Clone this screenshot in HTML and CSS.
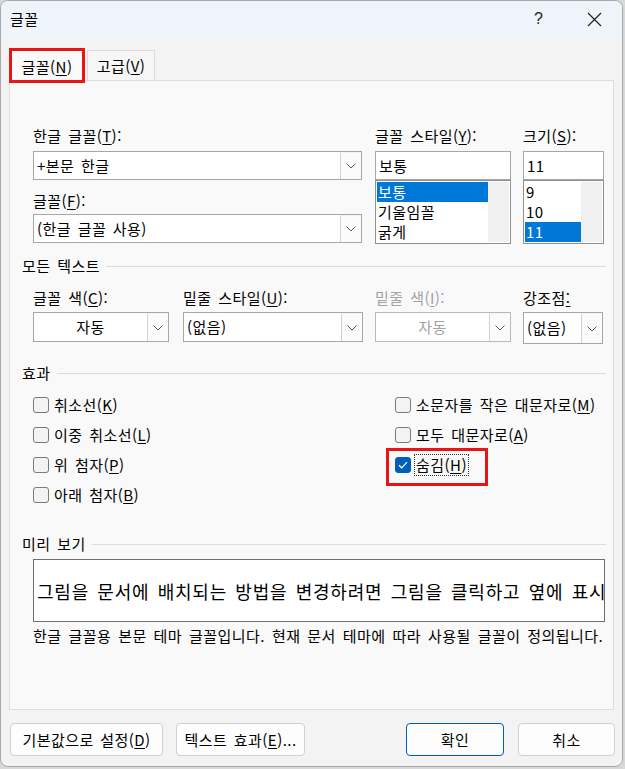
FILE: index.html
```html
<!DOCTYPE html>
<html lang="ko">
<head>
<meta charset="utf-8">
<title>글꼴</title>
<link rel="stylesheet" href="styles.css">
</head>
<body>
<div class="dialog">
  <div class="titlebar">
    <span class="title">글꼴</span>
    <span class="help">?</span>
    <span class="close"><svg width="15" height="15" viewBox="0 0 15 15"><path d="M1 1L14 14M14 1L1 14" stroke="#1b1b1b" stroke-width="1.1" fill="none"/></svg></span>
  </div>
  <div class="tabs">
    <div class="tab active">글꼴(<u>N</u>)</div>
    <div class="tab">고급(<u>V</u>)</div>
  </div>
  <div class="panel">
    <div class="fontrow">
      <div class="col col-font">
        <div class="lbl">한글 글꼴(<u>T</u>):</div>
        <div class="combo field-top"><span class="val">+본문 한글</span><span class="drop"><svg width="10" height="6" viewBox="0 0 10 6"><path d="M0.5 0.5L5 5L9.5 0.5" stroke="#5a5a5a" fill="none"/></svg></span></div>
        <div class="lbl lbl-second">글꼴(<u>F</u>):</div>
        <div class="combo field-second"><span class="val">(한글 글꼴 사용)</span><span class="drop"><svg width="10" height="6" viewBox="0 0 10 6"><path d="M0.5 0.5L5 5L9.5 0.5" stroke="#5a5a5a" fill="none"/></svg></span></div>
      </div>
      <div class="col col-style">
        <div class="lbl">글꼴 스타일(<u>Y</u>):</div>
        <div class="textbox field-top">보통</div>
        <div class="listbox">
          <div class="items">
            <div class="item sel">보통</div>
            <div class="item">기울임꼴</div>
            <div class="item">굵게</div>
          </div>
          <div class="vscroll"></div>
        </div>
      </div>
      <div class="col col-size">
        <div class="lbl">크기(<u>S</u>):</div>
        <div class="textbox field-top">11</div>
        <div class="listbox">
          <div class="items">
            <div class="item">9</div>
            <div class="item">10</div>
            <div class="item sel">11</div>
          </div>
          <div class="vscroll"></div>
        </div>
      </div>
    </div>

    <div class="group g-all">모든 텍스트</div>
    <div class="colorrow">
      <div class="cfield w-color">
        <div class="lbl">글꼴 색(<u>C</u>):</div>
        <div class="combo c30"><span class="val center">자동</span><span class="drop"><svg width="10" height="6" viewBox="0 0 10 6"><path d="M0.5 0.5L5 5L9.5 0.5" stroke="#5a5a5a" fill="none"/></svg></span></div>
      </div>
      <div class="cfield w-under">
        <div class="lbl">밑줄 스타일(<u>U</u>):</div>
        <div class="combo c30"><span class="val">(없음)</span><span class="drop"><svg width="10" height="6" viewBox="0 0 10 6"><path d="M0.5 0.5L5 5L9.5 0.5" stroke="#5a5a5a" fill="none"/></svg></span></div>
      </div>
      <div class="cfield w-ucolor disabled">
        <div class="lbl">밑줄 색(<u>I</u>):</div>
        <div class="combo c30"><span class="val center">자동</span><span class="drop"><svg width="10" height="6" viewBox="0 0 10 6"><path d="M0.5 0.5L5 5L9.5 0.5" stroke="#5a5a5a" fill="none"/></svg></span></div>
      </div>
      <div class="cfield w-emph">
        <div class="lbl">강조점<u>:</u></div>
        <div class="combo c32"><span class="val">(없음)</span><span class="drop"><svg width="10" height="6" viewBox="0 0 10 6"><path d="M0.5 0.5L5 5L9.5 0.5" stroke="#5a5a5a" fill="none"/></svg></span></div>
      </div>
    </div>

    <div class="group g-effects">효과</div>
    <div class="effects">
      <div class="check"><span class="box"></span><span class="ctext">취소선(<u>K</u>)</span></div>
      <div class="check"><span class="box"></span><span class="ctext">소문자를 작은 대문자로(<u>M</u>)</span></div>
      <div class="check"><span class="box"></span><span class="ctext">이중 취소선(<u>L</u>)</span></div>
      <div class="check"><span class="box"></span><span class="ctext">모두 대문자로(<u>A</u>)</span></div>
      <div class="check"><span class="box"></span><span class="ctext">위 첨자(<u>P</u>)</span></div>
      <div class="check marked"><span class="box on"><svg width="10" height="8" viewBox="0 0 10 8"><path d="M1 4.2L3.7 6.8L9 1.2" stroke="#ffffff" stroke-width="1.2" fill="none"/></svg></span><span class="ctext focus">숨김(<u>H</u>)</span></div>
      <div class="check"><span class="box"></span><span class="ctext">아래 첨자(<u>B</u>)</span></div>
      <div class="check empty"></div>
    </div>

    <div class="group g-preview">미리 보기</div>
    <div class="preview"><span>그림을 문서에 배치되는 방법을 변경하려면 그림을 클릭하고 옆에 표시</span></div>
    <div class="desc">한글 글꼴용 본문 테마 글꼴입니다. 현재 문서 테마에 따라 사용될 글꼴이 정의됩니다.</div>
  </div>

  <div class="buttons">
    <div class="btn b-default">기본값으로 설정(<u>D</u>)</div>
    <div class="btn b-effects">텍스트 효과(<u>E</u>)...</div>
    <div class="spacer"></div>
    <div class="btn b-ok primary">확인</div>
    <div class="btn b-cancel">취소</div>
  </div>
</div>
</body>
</html>
```

FILE: styles.css
```css
* { box-sizing: border-box; }
html, body { margin: 0; padding: 0; }
body {
  background: #d8d8d8;
  width: 625px;
  height: 769px;
  overflow: hidden;
  font-family: "Noto Sans CJK KR", "Noto Sans", sans-serif;
  font-size: 15px;
  color: #000;
  letter-spacing: 0.45px;
  word-spacing: 2px;
}
u { text-decoration-thickness: 1px; text-underline-offset: 2px; }

.dialog {
  width: 623px;
  height: 767px;
  background: #f3f3f3;
  border: 1px solid #a9a9a9;
  border-radius: 8px;
  overflow: hidden;
  display: flex;
  flex-direction: column;
}

/* title bar */
.titlebar {
  height: 36px;
  flex: none;
  background: #eef4f9;
  display: flex;
  align-items: center;
  padding-left: 9px;
}
.title { flex: 1; line-height: 20px; }
.help { width: 20px; margin-right: 33px; font-size: 16px; line-height: 20px; font-family: "Liberation Sans", sans-serif; color: #222; }
.close { width: 15px; height: 15px; margin-right: 20px; display: flex; }

/* tabs */
.tabs {
  height: 43px;
  flex: none;
  display: flex;
  align-items: flex-start;
  padding-top: 11px;
  padding-left: 8px;
  position: relative;
  z-index: 2;
}
.tab {
  line-height: 20px;
  display: flex;
  align-items: center;
  justify-content: center;
}
.tab.active {
  width: 76px;
  height: 35px;
  border: 3px solid #e81416;
  background: #f9f9f9;
  padding-top: 2px;
}
.tab:not(.active) {
  margin-top: 2px;
  margin-left: 2px;
  width: 68px;
  height: 30px;
  border: 1px solid #dadada;
  border-bottom: none;
  background: #f6f6f6;
}

/* panel */
.panel {
  flex: none;
  margin-left: 8px;
  width: 605px;
  height: 630px;
  border: 1px solid #dcdcdc;
  background: #f9f9f9;
  padding: 45px 7px 0 12px;
}
.lbl { line-height: 20px; white-space: nowrap; }

.fontrow { display: flex; margin-left: 11px; }
.col { display: flex; flex-direction: column; }
.col-font { width: 329px; }
.col-style { width: 136px; margin-left: 13px; }
.col-size { width: 81px; margin-left: 12px; }

.combo {
  display: flex;
  background: #fff;
  border: 1px solid #a7a7a7;
  height: 29px;
}
.combo .val { flex: 1; padding-left: 3px; line-height: 27px; white-space: nowrap; overflow: hidden; }
.combo .val.center { text-align: center; padding-left: 0; }
.combo .drop {
  width: 21px;
  flex: none;
  border-left: 1px solid #d2d2d2;
  border-top: 1px solid #f4f4f4;
  background: #fbfbfb;
  display: flex;
  align-items: center;
  justify-content: center;
}
.field-top { margin-top: 5px; }
.lbl-second { margin-top: 11px; }
.field-second { margin-top: 3px; }

.textbox {
  height: 29px;
  background: #fff;
  border: 1px solid #a7a7a7;
  padding-left: 3px;
  line-height: 27px;
}
.listbox {
  height: 64px;
  background: #fff;
  border: 1px solid #8f8f8f;
  display: flex;
  padding: 1px;
}
.items { flex: 1; display: flex; flex-direction: column; }
.item { height: 20px; line-height: 20px; padding-left: 1px; white-space: nowrap; }
.item.sel { background: #0078d7; color: #fff; }
.vscroll { width: 21px; flex: none; background: #f0f0f0; }

/* group headers */
.group {
  display: flex;
  align-items: center;
  line-height: 20px;
  white-space: nowrap;
}
.group::after {
  content: "";
  flex: 1;
  height: 1px;
  background: #dcdcdc;
  margin-left: 6px;
}
.g-all { margin-top: 12px; }
.g-effects { margin-top: 19px; }
.g-preview { margin-top: 24px; }

/* color row */
.colorrow { display: flex; align-items: flex-start; margin-left: 11px; margin-top: 12px; }
.cfield { display: flex; flex-direction: column; }
.cfield .combo { margin-top: 4px; }
.w-color { width: 136px; }
.w-under { width: 180px; margin-left: 14px; }
.w-ucolor { width: 136px; margin-left: 12px; }
.w-emph { width: 80px; margin-left: 12px; }
.c30 { height: 30px; }
.c32 { height: 32px; }
.c30 .val { line-height: 28px; }
.c32 .val { line-height: 30px; }
.disabled .lbl, .disabled .val { color: #a2a2a2; }
.disabled .combo { border-color: #b9b9b9; }

/* effects */
.effects {
  display: grid;
  grid-template-columns: 362px 1fr;
  grid-auto-rows: 30px;
  margin-left: 11px;
  margin-top: 7px;
}
.check { display: flex; align-items: center; white-space: nowrap; position: relative; }
.check .box {
  width: 16px;
  height: 16px;
  flex: none;
  border: 1px solid #7a7a7a;
  border-radius: 3px;
  background: #f3f3f3;
  margin-right: 5px;
  display: flex;
  align-items: center;
  justify-content: center;
}
.check .box.on { background: #005fb8; border-color: #005fb8; }
.ctext { line-height: 20px; }
.ctext.focus { outline: 1px dotted #333; outline-offset: 0; padding: 0 1px; margin-left: -1px; }
.check.marked::after {
  content: "";
  position: absolute;
  left: -9px;
  top: -2px;
  width: 96px;
  height: 32px;
  border: 3px solid #e81416;
}

/* preview */
.preview {
  margin-left: 11px;
  margin-top: 5px;
  width: 572px;
  height: 63px;
  background: #fff;
  border: 1px solid #6f6f6f;
  overflow: hidden;
  white-space: nowrap;
  display: flex;
  align-items: center;
  padding-left: 3px;
  font-size: 18px;
  letter-spacing: 0.8px;
  word-spacing: 2.4px;
}
.desc { margin-left: 11px; margin-top: 4px; line-height: 20px; white-space: nowrap; word-spacing: 2.3px; }

/* buttons */
.buttons {
  flex: none;
  display: flex;
  margin-top: 13px;
  padding-left: 9px;
  height: 33px;
}
.btn {
  height: 33px;
  background: #fdfdfd;
  border: 1px solid #d0d0d0;
  border-radius: 4px;
  display: flex;
  align-items: center;
  justify-content: center;
  white-space: nowrap;
  line-height: 20px;
}
.b-default { width: 153px; }
.b-effects { width: 129px; margin-left: 13px; }
.spacer { flex: 1; }
.b-ok { width: 98px; border-color: #005fb8; }
.b-cancel { width: 97px; margin-left: 14px; margin-right: 7px; }
```
